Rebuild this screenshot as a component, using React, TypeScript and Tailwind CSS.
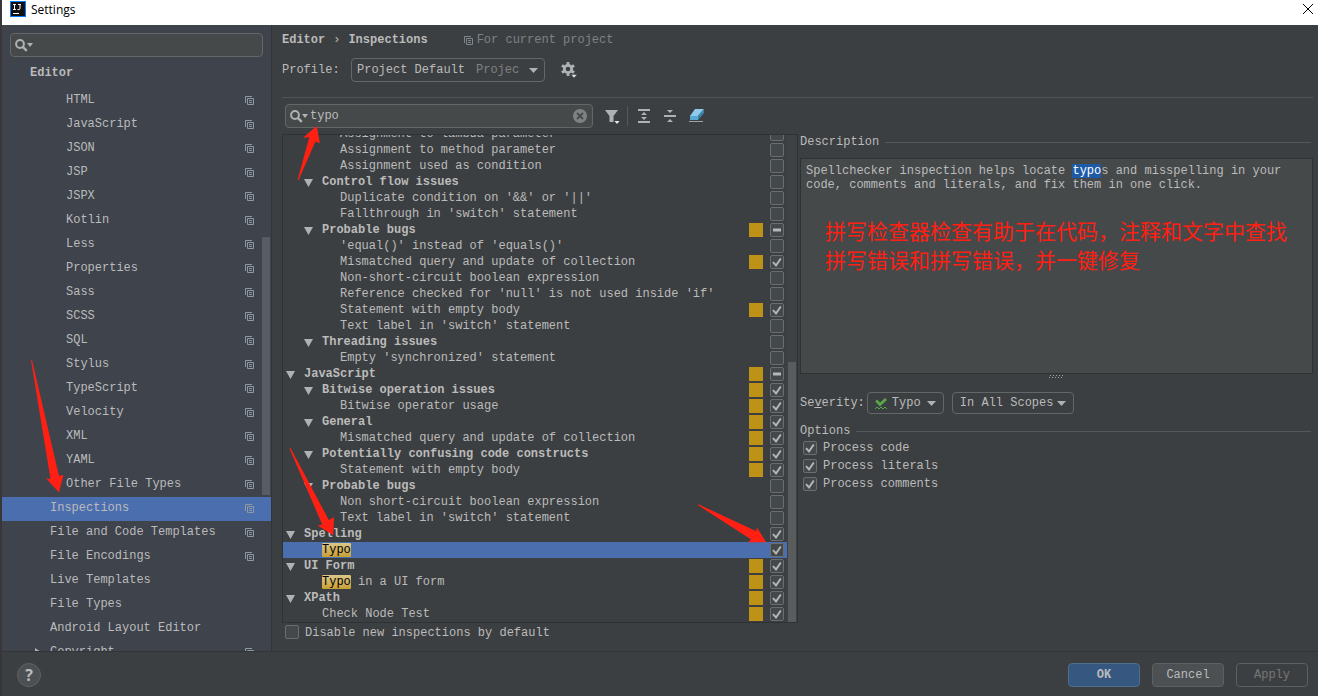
import type { ReactNode } from "react";
import clsx from "clsx";

type Page = { name: string; level: 1 | 2; shared: boolean };

type Mark = "on" | "off" | "mixed";

type Inspection = {
  name: string;
  level: 0 | 1 | 2;
  group?: boolean;
  mark: Mark;
  warn?: boolean;
  hit?: string;
  selected?: boolean;
};

const languages = [
  "HTML",
  "JavaScript",
  "JSON",
  "JSP",
  "JSPX",
  "Kotlin",
  "Less",
  "Properties",
  "Sass",
  "SCSS",
  "SQL",
  "Stylus",
  "TypeScript",
  "Velocity",
  "XML",
  "YAML",
  "Other File Types",
];

const pages: Page[] = [
  ...languages.map((name): Page => ({ name, level: 2, shared: true })),
  { name: "Inspections", level: 1, shared: true },
  { name: "File and Code Templates", level: 1, shared: true },
  { name: "File Encodings", level: 1, shared: true },
  { name: "Live Templates", level: 1, shared: false },
  { name: "File Types", level: 1, shared: false },
  { name: "Android Layout Editor", level: 1, shared: false },
  { name: "Copyright", level: 1, shared: true },
];

const inspections: Inspection[] = [
  { name: "Assignment to lambda parameter", level: 2, mark: "off" },
  { name: "Assignment to method parameter", level: 2, mark: "off" },
  { name: "Assignment used as condition", level: 2, mark: "off" },
  { name: "Control flow issues", level: 1, group: true, mark: "off" },
  { name: "Duplicate condition on '&&' or '||'", level: 2, mark: "off" },
  { name: "Fallthrough in 'switch' statement", level: 2, mark: "off" },
  { name: "Probable bugs", level: 1, group: true, mark: "mixed", warn: true },
  { name: "'equal()' instead of 'equals()'", level: 2, mark: "off" },
  { name: "Mismatched query and update of collection", level: 2, mark: "on", warn: true },
  { name: "Non-short-circuit boolean expression", level: 2, mark: "off" },
  { name: "Reference checked for 'null' is not used inside 'if'", level: 2, mark: "off" },
  { name: "Statement with empty body", level: 2, mark: "on", warn: true },
  { name: "Text label in 'switch' statement", level: 2, mark: "off" },
  { name: "Threading issues", level: 1, group: true, mark: "off" },
  { name: "Empty 'synchronized' statement", level: 2, mark: "off" },
  { name: "JavaScript", level: 0, group: true, mark: "mixed", warn: true },
  { name: "Bitwise operation issues", level: 1, group: true, mark: "on", warn: true },
  { name: "Bitwise operator usage", level: 2, mark: "on", warn: true },
  { name: "General", level: 1, group: true, mark: "on", warn: true },
  { name: "Mismatched query and update of collection", level: 2, mark: "on", warn: true },
  { name: "Potentially confusing code constructs", level: 1, group: true, mark: "on", warn: true },
  { name: "Statement with empty body", level: 2, mark: "on", warn: true },
  { name: "Probable bugs", level: 1, group: true, mark: "off" },
  { name: "Non short-circuit boolean expression", level: 2, mark: "off" },
  { name: "Text label in 'switch' statement", level: 2, mark: "off" },
  { name: "Spelling", level: 0, group: true, mark: "on" },
  { name: "", hit: "Typo", level: 1, mark: "on", selected: true },
  { name: "UI Form", level: 0, group: true, mark: "on", warn: true },
  { name: " in a UI form", hit: "Typo", level: 1, mark: "on", warn: true },
  { name: "XPath", level: 0, group: true, mark: "on", warn: true },
  { name: "Check Node Test", level: 1, mark: "on", warn: true },
];

function CopyIcon({ className }: { className?: string }) {
  return (
    <svg className={clsx("h-[9px] w-[9px] shrink-0", className)} viewBox="0 0 9 9" fill="none" stroke="currentColor">
      <path d="M7 .5H.5V7" />
      <path d="M2.5 2.5h6v6h-6zM4 4.5h3M4 6.5h3" />
    </svg>
  );
}

function SearchIcon() {
  return (
    <svg className="h-[13px] w-[18px] shrink-0" viewBox="0 0 18 13" fill="none">
      <circle cx="5" cy="5" r="3.9" stroke="#afb1b3" strokeWidth="2" />
      <path d="M7.8 7.8l4 4" stroke="#afb1b3" strokeWidth="2.4" />
      <path d="M12 4h6l-3 4z" fill="#afb1b3" />
    </svg>
  );
}

function DownArrow() {
  return (
    <svg className="pointer-events-none h-[5px] w-[9px] shrink-0" viewBox="0 0 9 5" fill="#afb1b3">
      <path d="M0 0h9L4.5 5z" />
    </svg>
  );
}

function CheckBox({ id, mark }: { id: string; mark: Mark }) {
  return (
    <span className="grid size-3.5 shrink-0">
      <input
        id={id}
        type="checkbox"
        defaultChecked={mark === "on"}
        className="size-3.5 appearance-none rounded-xs border border-[#6b6d6e] bg-[#43494a] [grid-area:1/1]"
      />
      {mark === "on" && (
        <svg className="pointer-events-none size-3.5 [grid-area:1/1]" viewBox="0 0 14 14" fill="none">
          <path d="M3 7.2l3 3.3 4.8-7" stroke="#b4b6b7" strokeWidth="2" />
        </svg>
      )}
      {mark === "mixed" && (
        <svg className="pointer-events-none size-3.5 [grid-area:1/1]" viewBox="0 0 14 14">
          <rect x="3" y="5.5" width="8" height="3" fill="#b4b6b7" />
        </svg>
      )}
    </span>
  );
}

function Arrow({ className, box, d }: { className: string; box: string; d: string }) {
  return (
    <svg className={clsx("pointer-events-none absolute z-10", className)} viewBox={box} fill="#ff2013">
      <path d={d} />
    </svg>
  );
}

function GroupTitle({ children }: { children: ReactNode }) {
  return (
    <div className="flex h-4 items-center gap-1.5 pr-0.5">
      <h2>{children}</h2>
      <span className="h-px flex-1 bg-[#55585a]" />
    </div>
  );
}

function Sidebar() {
  return (
    <aside className="relative flex w-[270px] shrink-0 flex-col overflow-hidden border-r border-[#323537] bg-[#3e434c]">
      <label className="mx-2 mt-2 flex h-6 shrink-0 items-center rounded-sm border border-[#646768] bg-[#45494a] px-1">
        <SearchIcon />
        <input aria-label="Search settings" className="w-full bg-transparent outline-none" />
      </label>
      <h2 className="mt-1.5 mb-0.5 flex h-6 shrink-0 items-start pt-0.5 pl-7 font-bold">Editor</h2>
      <nav className="flex min-h-0 flex-1 flex-col overflow-hidden">
        {pages.map((page) => (
          <a
            key={page.name}
            href="#"
            className={clsx(
              "flex h-6 shrink-0 items-center justify-between pr-[17px]",
              page.level === 2 ? "pl-16" : "pl-12",
              page.name === "Inspections" && "bg-[#4b6eaf]",
            )}
          >
            <span className="flex items-center pb-0.5">
              {page.name === "Copyright" && (
                <svg className="-ml-4 mr-2 h-2 w-2" viewBox="0 0 8 8" fill="#afb1b3">
                  <path d="M1 0l6 4-6 4z" />
                </svg>
              )}
              {page.name}
            </span>
            {page.shared && <CopyIcon className="mb-px text-[#8d98a3]" />}
          </a>
        ))}
      </nav>
      <span className="absolute top-[212px] right-px h-[258px] w-2 bg-[#585c66]" />
      <Arrow
        className="top-[334px] left-[28px] h-[134px] w-[36px]"
        box="30 359 36 134"
        d="M31 360h1L59 476l4.5-1L59 492.5 46 478.3l4.5.6z"
      />
    </aside>
  );
}

function Toolbar() {
  return (
    <div className="flex h-9 shrink-0 items-center pl-[3px]">
      <label className="flex h-6 w-[308px] items-center rounded-sm border border-[#646768] bg-[#45494a] px-1">
        <SearchIcon />
        <input
          aria-label="Search inspections"
          defaultValue="typo"
          className="min-w-0 flex-1 bg-transparent pl-0.5 outline-none"
        />
        <button type="button" aria-label="Clear search">
          <svg className="size-4" viewBox="0 0 16 16" fill="none">
            <circle cx="8" cy="8" r="7" fill="#7f8283" />
            <path d="M5 5l6 6M11 5l-6 6" stroke="#45494a" strokeWidth="1.8" />
          </svg>
        </button>
      </label>
      <button type="button" aria-label="Filter" className="ml-3">
        <svg className="size-4" viewBox="0 0 16 16">
          <path d="M0 2h13L8.5 8v6h-4V8z" fill="#afb1b3" />
          <path d="M9.5 13h5L12 16z" fill="#e8e8e8" />
        </svg>
      </button>
      <span className="mx-1.5 h-5 w-px bg-[#55585a]" />
      <button type="button" aria-label="Expand all" className="ml-[3px]">
        <svg className="size-3.5" viewBox="0 0 14 14" fill="#afb1b3">
          <path d="M1 0h12v2H1zM1 12h12v2H1zM7 3l3 3H4zM7 11l3-3H4z" />
        </svg>
      </button>
      <button type="button" aria-label="Collapse all" className="ml-3">
        <svg className="size-3.5" viewBox="0 0 14 14" fill="#afb1b3">
          <path d="M1 6h12v2H1zM4 1h6L7 4zM4 13h6l-3-3z" />
        </svg>
      </button>
      <button type="button" aria-label="Reset to empty" className="ml-3">
        <svg className="size-4" viewBox="0 0 16 16">
          <path d="M6 1h9L9 8H1z" fill="#8ecbe8" />
          <path d="M15 1v4l-6 7V8z" fill="#3c84ad" />
          <path d="M1 8h8v4H1z" fill="#56a9d3" />
          <path d="M0 13.5h14" stroke="#a0a2a3" />
        </svg>
      </button>
    </div>
  );
}

function InspectionRow({ item, id }: { item: Inspection; id: string }) {
  return (
    <li className={clsx("flex h-4 shrink-0 items-center gap-[7px] pr-[3px]", item.selected && "bg-[#4b6eaf]")}>
      <span
        className={clsx(
          "flex flex-1 items-center",
          item.level === 0 && "pl-[3px]",
          item.level === 1 && "pl-[21px]",
          item.level === 2 && "pl-[39px]",
        )}
      >
        <svg className="mt-0.5 mr-[9px] h-2 w-[9px]" viewBox="0 0 9 8" fill="#afb1b3">
          {item.group && <path d="M0 0h9L4.5 8z" />}
        </svg>
        <label htmlFor={id} className={clsx("-mt-px whitespace-pre", item.group && "font-bold")}>
          {item.hit && (
            <mark className="rounded-xs bg-linear-to-b from-[#dcc788] to-[#c79f2f] text-black">{item.hit}</mark>
          )}
          {item.name}
        </label>
      </span>
      {item.warn && <span className="size-3.5 bg-[#be9117]" />}
      <CheckBox id={id} mark={item.mark} />
    </li>
  );
}

function InspectionTree() {
  return (
    <div className="flex min-h-0 flex-1 overflow-hidden border border-[#2f3234]">
      <ul className="flex flex-1 flex-col justify-end overflow-hidden">
        {inspections.map((item, index) => (
          <InspectionRow key={index} id={`inspection-${index}`} item={item} />
        ))}
      </ul>
      <div className="flex w-[10px] flex-col justify-end bg-[#3f4244] px-px">
        <span className="h-[260px] bg-[#595c5d]" />
      </div>
    </div>
  );
}

function Details() {
  return (
    <section className="min-w-0 pt-9">
      <GroupTitle>Description</GroupTitle>
      <div className="mt-2 h-54 border border-[#2f3234] bg-[#45494a] px-[5px] py-[5px]">
        <p className="max-w-[480px] leading-3.5">
          Spellchecker inspection helps locate <mark className="bg-[#1d5aa8] text-white">typo</mark>s and misspelling in
          your code, comments and literals, and fix them in one click.
        </p>
        <p
          lang="zh"
          className="mt-6 ml-[19px] font-['Noto_Sans_CJK_SC',sans-serif] text-[21px] leading-[29px] text-[#ff2013]"
        >
          拼写检查器检查有助于在代码，注释和文字中查找
          <br />
          拼写错误和拼写错误，并一键修复
        </p>
      </div>
      <svg className="mx-auto mt-px h-1 w-4" viewBox="0 0 16 4" stroke="#a0a2a3" strokeDasharray="1 2">
        <path d="M1 .5h15M0 2.5h15" />
      </svg>

      <div className="mt-[13px] flex h-[22px] items-center">
        <label htmlFor="severity">
          Se<span className="underline">v</span>erity:
        </label>
        <span className="ml-0.5 flex h-[22px] items-center rounded-sm border border-[#646768] px-[7px]">
          <svg className="mt-0.5 mr-[5px] h-3 w-3" viewBox="0 0 12 12" fill="none" stroke="#57a64a">
            <path d="M1.2 2.5l3.8 4L11 1" strokeWidth="2.8" />
            <path d="M0 11l2-2 2 2 2-2 2 2 2-2 2 2" />
          </svg>
          <select id="severity" className="w-[35px] appearance-none bg-transparent outline-none">
            <option>Typo</option>
          </select>
          <DownArrow />
        </span>
        <span className="ml-2 flex h-[22px] items-center rounded-sm border border-[#646768] px-[7px]">
          <select aria-label="Scope" className="w-[97px] appearance-none bg-transparent outline-none">
            <option>In All Scopes</option>
          </select>
          <DownArrow />
        </span>
      </div>

      <div className="mt-[9px]">
        <GroupTitle>Options</GroupTitle>
        {["code", "literals", "comments"].map((option) => (
          <div key={option} className="flex h-[18px] items-center gap-1.5 pl-[3px]">
            <CheckBox id={option} mark="on" />
            <label htmlFor={option}>Process {option}</label>
          </div>
        ))}
      </div>
    </section>
  );
}

export default function App() {
  return (
    <div className="relative flex h-screen flex-col overflow-hidden border-l-2 border-[#383638] bg-[#3c3f41] font-['Liberation_Mono',monospace] text-[12px] leading-4 text-[#bbbbbb]">
      <header className="flex h-[25px] shrink-0 items-start bg-white pr-1 pl-2 text-black">
        <svg className="mt-px size-4" viewBox="0 0 16 16">
          <rect width="16" height="16" fill="#087cfa" />
          <rect x="1" y="1" width="14" height="14" fill="#111" />
          <path d="M3 3.5h3M3 8.5h3M4.5 3.5v5M8 3.5h3M10 3.5v4q0 1-1 1H7.5M3 12.5h6" fill="none" stroke="#fff" />
        </svg>
        <h1 className="mt-0.5 ml-[5px] flex-1 font-['Open_Sans',sans-serif]">Settings</h1>
        <button type="button" aria-label="Close" className="mt-[3px]">
          <svg className="size-3" viewBox="0 0 12 12" stroke="#000">
            <path d="M1 1l10 10M11 1L1 11" />
          </svg>
        </button>
      </header>

      <div className="flex min-h-0 flex-1">
        <Sidebar />
        <main className="relative flex min-w-0 flex-1 flex-col pr-[5px] pl-2.5">
          <div className="mt-[7px] flex h-4 shrink-0 items-center font-bold">
            <span>Editor</span>
            <span className="mx-2 font-normal">›</span>
            <span>Inspections</span>
            <CopyIcon className="ml-9 text-[#7d868c]" />
            <span className="ml-1 font-normal text-[#7f8182]">For current project</span>
          </div>

          <div className="mt-2.5 flex h-6 shrink-0 items-center">
            <label htmlFor="profile" className="w-[69px]">
              Profile:
            </label>
            <span className="flex h-6 w-[194px] items-center rounded-sm border border-[#646768] pr-1.5 pl-[5px]">
              <select id="profile" className="w-[119px] appearance-none bg-transparent outline-none">
                <option>Project Default</option>
              </select>
              <span className="flex-1 text-[#7f8182]">Projec</span>
              <DownArrow />
            </span>
            <button type="button" aria-label="Profile actions" className="ml-4">
              <svg className="size-4" viewBox="0 0 16 16">
                <circle cx="7" cy="7" r="3.7" fill="none" stroke="#afb1b3" strokeWidth="2.8" />
                <path
                  d="M7 0v3M7 11v3M.9 3.5l2.6 1.5M10.5 9l2.6 1.5M.9 10.5L3.5 9M10.5 5l2.6-1.5"
                  stroke="#afb1b3"
                  strokeWidth="2.8"
                />
                <path d="M10 12.5h6L13 16z" fill="#e8e8e8" stroke="#3c3f41" strokeWidth=".5" />
              </svg>
            </button>
          </div>

          <div className="mt-[15px] h-px shrink-0 bg-[#515456]" />

          <div className="grid min-h-0 flex-1 grid-cols-[516fr_513fr] gap-x-0.5">
            <div className="flex min-h-0 min-w-0 flex-col">
              <Toolbar />
              <InspectionTree />
              <div className="flex h-7 shrink-0 items-start gap-1.5 pt-0.5 pl-[3px]">
                <CheckBox id="disable-new" mark="off" />
                <label htmlFor="disable-new">Disable new inspections by default</label>
              </div>
            </div>
            <Details />
          </div>

          <Arrow
            className="top-[100px] left-[24px] h-[58px] w-[26px]"
            box="296 125 26 58"
            d="M316.7 126L303 137.8l6.3-.5L297.6 180h1l16.8-38.5 4.5 1.8z"
          />
          <Arrow
            className="top-[422px] left-[16px] h-[90px] w-[48px]"
            box="288 447 48 90"
            d="M289.5 448.5l1-.5 38.3 72 5.2-2.7-.7 18-15.6-9.8 4.5-1z"
          />
          <Arrow
            className="top-[478px] left-[425px] h-[42px] w-[72px]"
            box="697 503 72 42"
            d="M697.7 505l.5-.8 58.2 27 .3-4.2 9.5 15.3h-18.5l3.5-2.8z"
          />
        </main>
      </div>

      <footer className="flex h-[45px] shrink-0 items-center gap-3 border-t border-[#323537] pt-0.5 pr-2.5 pl-[15px]">
        <button
          type="button"
          aria-label="Help"
          className="mr-auto size-6 rounded-full border border-[#5f6263] bg-[#4c5052] font-['Open_Sans',sans-serif] text-[16px] leading-5 font-bold"
        >
          ?
        </button>
        <button type="button" className="h-6 w-[72px] rounded-sm border border-[#4c708c] bg-[#365880] font-bold">
          OK
        </button>
        <button type="button" className="h-6 w-[72px] rounded-sm border border-[#5e6060] bg-[#4c5052]">
          Cancel
        </button>
        <button type="button" disabled className="h-6 w-[72px] rounded-sm border border-[#5e6060] text-[#777777]">
          Apply
        </button>
      </footer>
    </div>
  );
}
